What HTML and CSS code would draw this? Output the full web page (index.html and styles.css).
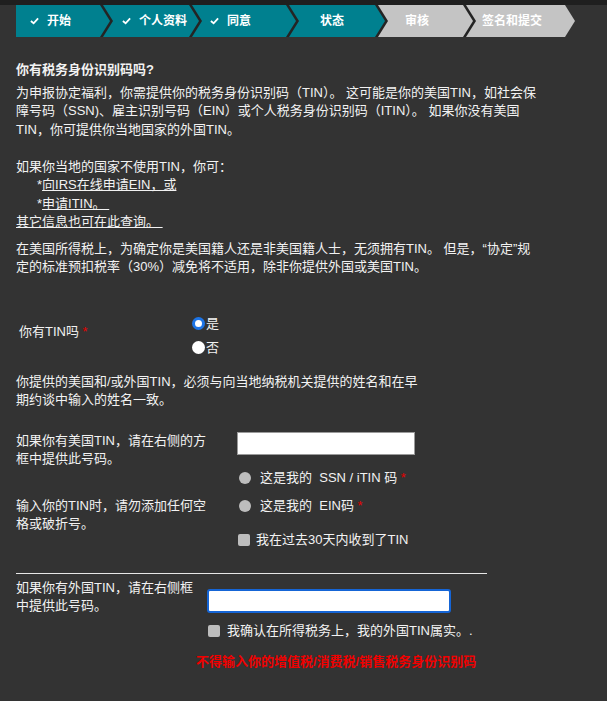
FILE: index.html
```html
<!DOCTYPE html>
<html lang="zh-CN">
<head>
  <meta charset="UTF-8">
  <meta name="viewport" content="width=device-width, initial-scale=1.0">
  <title>税务身份识别码</title>
  <link rel="stylesheet" href="styles.css">
</head>
<body>
  <!-- 进度条 -->
  <header class="topband">
    <ol class="steps">
      <li class="step"><svg class="tick" viewBox="0 0 10 8"><polyline points="1,4 4,6.5 9,1"/></svg>开始</li>
      <li class="step"><svg class="tick" viewBox="0 0 10 8"><polyline points="1,4 4,6.5 9,1"/></svg>个人资料</li>
      <li class="step"><svg class="tick" viewBox="0 0 10 8"><polyline points="1,4 4,6.5 9,1"/></svg>同意</li>
      <li class="step">状态</li>
      <li class="step todo">审核</li>
      <li class="step todo">签名和提交</li>
    </ol>
  </header>

  <main class="form">
    <h1 class="title">你有税务身份识别码吗?</h1>
    <p class="para first">为申报协定福利，你需提供你的税务身份识别码（TIN）。 这可能是你的美国TIN，如社会保障号码（SSN)、雇主识别号码（EIN）或个人税务身份识别码（ITIN）。 如果你没有美国TIN，你可提供你当地国家的外国TIN。</p>

    <p class="para gap">如果你当地的国家不使用TIN，你可：<br>
      <span class="indent">*<a href="#">向IRS在线申请EIN，或</a></span><br>
      <span class="indent">*<a href="#">申请ITIN。&nbsp;</a></span><br>
      <a href="#">其它信息也可在此查询。&nbsp;</a>
    </p>

    <p class="para small-gap">在美国所得税上，为确定你是美国籍人还是非美国籍人士，无须拥有TIN。 但是，“协定”规定的标准预扣税率（30%）减免将不适用，除非你提供外国或美国TIN。</p>

    <div class="question">
      <div class="q-label">你有TIN吗 <span class="req">*</span></div>
      <div class="q-options">
        <label class="choice"><input type="radio" name="has-tin" class="radio" checked>是</label>
        <label class="choice"><input type="radio" name="has-tin" class="radio">否</label>
      </div>
    </div>

    <p class="para note">你提供的美国和/或外国TIN，必须与向当地纳税机关提供的姓名和在早期约谈中输入的姓名一致。</p>

    <section class="tin-us">
      <div class="side">
        <p class="hint">如果你有美国TIN，请在右侧的方框中提供此号码。</p>
        <p class="hint second">输入你的TIN时，请勿添加任何空格或破折号。</p>
      </div>
      <div class="fields">
        <input type="text" class="box">
        <label class="opt opt-first"><input type="radio" name="tin-kind" class="dot"><span>这是我的&nbsp; SSN / iTIN 码 <span class="req">*</span></span></label>
        <label class="opt opt-second"><input type="radio" name="tin-kind" class="dot"><span>这是我的&nbsp; EIN码 <span class="req">*</span></span></label>
        <label class="tickrow"><input type="checkbox" class="square">我在过去30天内收到了TIN</label>
      </div>
    </section>

    <hr class="rule">

    <section class="tin-foreign">
      <p class="hint">如果你有外国TIN，请在右侧框中提供此号码。</p>
      <div class="fields">
        <input type="text" class="box focus">
        <label class="tickrow near"><input type="checkbox" class="square">我确认在所得税务上，我的外国TIN属实。.</label>
        <p class="warning">不得输入你的增值税/消费税/销售税务身份识别码</p>
      </div>
    </section>
  </main>
</body>
</html>
```

FILE: styles.css
```css
/* Generale */
body {
  margin: 0;
  background: #333333;
  color: #f2f2f2;
  font-family: "Liberation Sans", "Noto Sans CJK SC", sans-serif;
  font-size: 13px;
  line-height: 18.5px;
}

p {
  margin: 0;
}

a {
  color: inherit;
}

.req {
  color: #e60000;
}

/* Barra dei passi */
.topband {
  border-top: 5px solid #1f1f1f;
}

.steps {
  display: flex;
  list-style: none;
  margin: 0 0 0 16px;
  padding: 0;
  width: fit-content;
  background: #242424;
}

.step {
  box-sizing: border-box;
  height: 32px;
  display: flex;
  align-items: center;
  gap: 8px;
  margin-left: -7px;
  color: #ffffff;
  font-size: 12px;
  font-weight: bold;
  background: #00808f;
  clip-path: polygon(0 0, calc(100% - 10px) 0, 100% 50%, calc(100% - 10px) 100%, 0 100%, 10px 50%);
}

.step.todo {
  background: #c4c4c4;
}

.step:first-child {
  margin-left: 0;
  clip-path: polygon(0 0, calc(100% - 10px) 0, 100% 50%, calc(100% - 10px) 100%, 0 100%);
}

.step:last-child {
  margin-right: -10px;
}

.step:nth-child(1) { width: 94px; padding-left: 14px; }
.step:nth-child(2) { width: 96px; padding-left: 19px; }
.step:nth-child(3) { width: 104px; padding-left: 18px; }
.step:nth-child(4) { width: 96px; padding-left: 31px; }
.step:nth-child(5) { width: 95px; padding-left: 27px; }
.step:nth-child(6) { width: 109px; padding-left: 16px; }

.tick {
  width: 9px;
  height: 8px;
  fill: none;
  stroke: #ffffff;
  stroke-width: 2;
}

/* Modulo */
.form {
  padding: 0 16px;
}

.title {
  margin: 23.75px 0 0;
  font-size: 13px;
  line-height: 18.5px;
  font-weight: bold;
}

.para {
  width: 524px;
}

.para.first {
  margin-top: 4.5px;
}

.para.gap {
  margin-top: 18.5px;
}

.para.small-gap {
  margin-top: 8px;
}

.indent {
  padding-left: 21px;
}

/* Domanda TIN */
.question {
  display: grid;
  grid-template-columns: 176px 1fr;
  margin-top: 35px;
}

.q-label {
  padding-left: 3px;
  margin-top: 10.75px;
}

.q-options {
  display: flex;
  flex-direction: column;
}

.choice {
  display: flex;
  align-items: center;
  height: 24px;
}

.radio {
  appearance: none;
  box-sizing: border-box;
  width: 13px;
  height: 13px;
  margin: 0 1px 0 0;
  border-radius: 50%;
  background: #ffffff;
}

.radio:checked {
  border: 3px solid #1c74e6;
}

.para.note {
  width: 408px;
  margin-top: 13px;
}

/* TIN americano */
.tin-us {
  display: grid;
  grid-template-columns: 195px 1fr;
  column-gap: 26px;
  margin-top: 22px;
}

.hint.second {
  margin-top: 28px;
}

.fields {
  display: flex;
  flex-direction: column;
  align-items: flex-start;
}

.box {
  box-sizing: border-box;
  width: 178px;
  height: 23px;
  margin: 0;
  border: 1px solid #9a9a9a;
  background: #ffffff;
}

.box.focus {
  width: 244px;
  height: 24px;
  border: 2px solid #1565d6;
  border-radius: 3px;
  outline: none;
}

.opt {
  display: flex;
  align-items: center;
  margin-left: 2px;
}

.opt-first {
  margin-top: 13.75px;
}

.opt-second {
  margin-top: 9.5px;
}

.dot {
  appearance: none;
  width: 12px;
  height: 12px;
  margin: 0 9px 0 0;
  border-radius: 50%;
  background: #bdbdbd;
}

.tickrow {
  display: flex;
  align-items: center;
  margin-top: 16px;
  margin-left: 1px;
}

.square {
  appearance: none;
  width: 12px;
  height: 12px;
  margin: 0 6px 0 0;
  border-radius: 2px;
  background: #bdbdbd;
}

.rule {
  width: 471px;
  margin: 23.5px 0 0;
  border: 0;
  border-top: 1px solid #e6e6e6;
}

/* TIN estero */
.tin-foreign {
  display: grid;
  grid-template-columns: 184px 1fr;
  column-gap: 7px;
  margin-top: 4.75px;
}

.tin-foreign .fields {
  padding-top: 10px;
}

.tickrow.near {
  margin-top: 8.75px;
}

.tickrow.near .square {
  margin-right: 7px;
}

.warning {
  margin: 12.5px 0 0 -11px;
  color: #f00000;
  font-weight: bold;
}
```
